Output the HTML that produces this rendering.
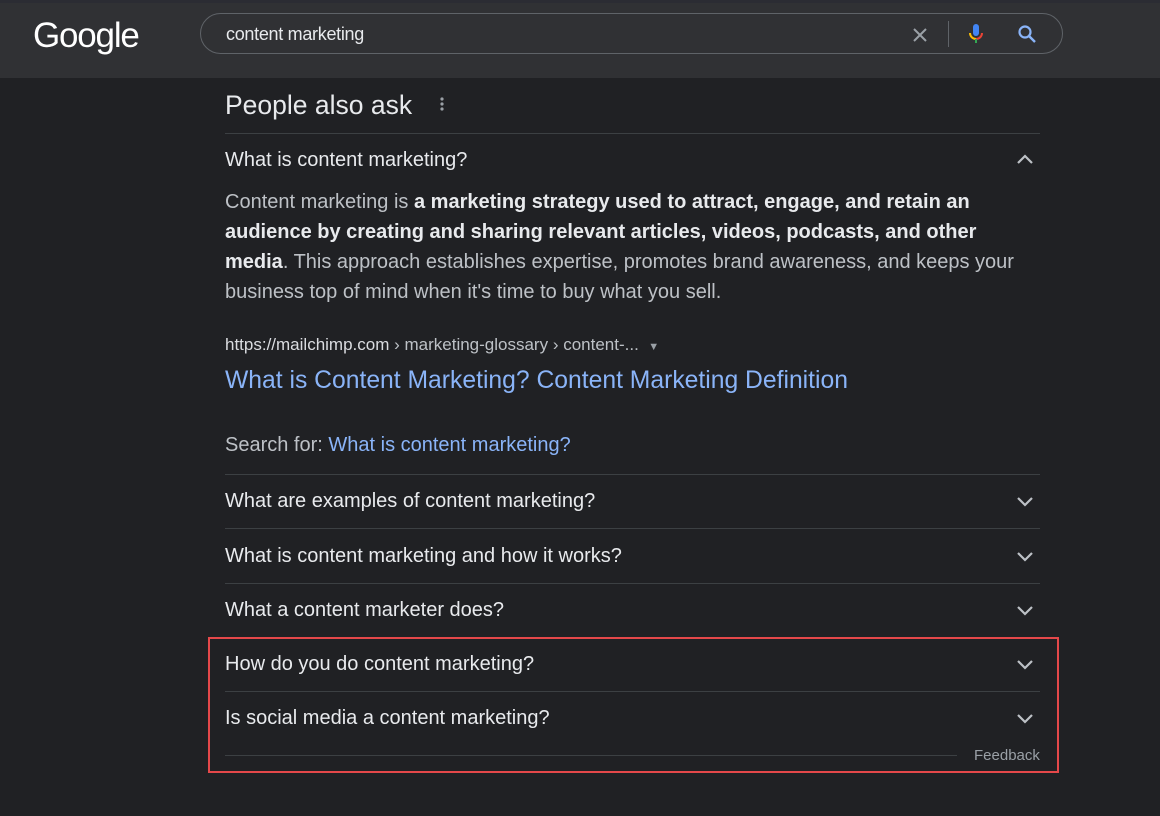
<!DOCTYPE html>
<html><head><meta charset="utf-8"><style>
body{margin:0;width:1160px;height:816px;background:#202124;font-family:"Liberation Sans",Arial,sans-serif;position:relative;overflow:hidden;color:#bdc1c6}
.hdr{position:absolute;left:0;top:0;width:1160px;height:78px;background:#303134;border-top:3px solid #2b2c33;box-sizing:border-box}
.logo{position:absolute;left:33px;top:16px;font-size:35px;color:#fff;letter-spacing:-1.2px}
.sb{position:absolute;left:200px;top:13px;width:863px;height:41px;border:1px solid #5f6368;border-radius:22px;box-sizing:border-box}
.q{position:absolute;left:226px;top:24px;font-size:18px;color:#e8eaed;letter-spacing:-0.3px}
.abs{position:absolute}
.line{position:absolute;left:225px;width:815px;height:1px;background:#3c4043}
.qu{position:absolute;left:225px;font-size:20px;color:#e8eaed}
.chev{position:absolute;left:1016px}
.ans{position:absolute;left:225px;top:187px;width:800px;font-size:20px;line-height:30px;color:#bdc1c6}
.ans b{color:#e8eaed}
</style></head><body>
<div class="hdr"></div>
<div class="logo">Google</div>
<div class="sb"></div>
<div class="q">content marketing</div>
<svg class="abs" style="left:911px;top:26px" width="18" height="18"><path d="M3 3L15 15M15 3L3 15" stroke="#9aa0a6" stroke-width="2"/></svg>
<div class="abs" style="left:948px;top:21px;width:1px;height:26px;background:#5f6368"></div>
<svg class="abs" style="left:966px;top:23px" width="20" height="24"><rect x="7" y="1" width="6" height="12" rx="3" fill="#4285f4"/><path d="M4 10a6 6 0 0 0 6 6" stroke="#fbbc04" stroke-width="2" fill="none"/><path d="M10 16a6 6 0 0 0 6-6" stroke="#ea4335" stroke-width="2" fill="none"/><path d="M10 16v4" stroke="#34a853" stroke-width="2"/></svg>
<svg class="abs" style="left:1017px;top:24px" width="22" height="22"><circle cx="8" cy="8" r="5.5" stroke="#8ab4f8" stroke-width="2.2" fill="none"/><path d="M12 12l6 6" stroke="#8ab4f8" stroke-width="2.4"/></svg>

<div class="abs" style="left:225px;top:90px;font-size:26.5px;color:#e8eaed">People also ask</div>
<svg class="abs" style="left:438px;top:96px" width="8" height="18"><circle cx="4" cy="3" r="1.6" fill="#9aa0a6"/><circle cx="4" cy="8" r="1.6" fill="#9aa0a6"/><circle cx="4" cy="13" r="1.6" fill="#9aa0a6"/></svg>
<div class="line" style="top:133px"></div>
<div class="qu" style="top:149px">What is content marketing?</div>
<svg class="chev" style="top:151px" width="18" height="18"><path d="M2 12L9 5L16 12" stroke="#bdc1c6" stroke-width="2.2" fill="none"/></svg>
<div class="ans">Content marketing is <b>a marketing strategy used to attract, engage, and retain an audience by creating and sharing relevant articles, videos, podcasts, and other media</b>. This approach establishes expertise, promotes brand awareness, and keeps your business top of mind when it's time to buy what you sell.</div>
<div class="abs" style="left:225px;top:335px;font-size:17px;color:#dadce0">https://mailchimp.com <span style="color:#bdc1c6">› marketing-glossary › content-... &nbsp;<span style="font-size:11px;color:#9aa0a6">▼</span></span></div>
<div class="abs" style="left:225px;top:367px;font-size:24.7px;color:#8ab4f8">What is Content Marketing? Content Marketing Definition</div>
<div class="abs" style="left:225px;top:434px;font-size:20px;color:#bdc1c6">Search for: <span style="color:#8ab4f8">What is content marketing?</span></div>
<div class="line" style="top:474px"></div>
<div class="qu" style="top:490px">What are examples of content marketing?</div>
<div class="line" style="top:528px"></div>
<div class="qu" style="top:545px">What is content marketing and how it works?</div>
<div class="line" style="top:583px"></div>
<div class="qu" style="top:599px">What a content marketer does?</div>
<div class="line" style="top:637px"></div>
<div class="qu" style="top:653px">How do you do content marketing?</div>
<div class="line" style="top:691px"></div>
<div class="qu" style="top:707px">Is social media a content marketing?</div>
<svg class="chev" style="top:492px" width="18" height="18"><path d="M2 6L9 13L16 6" stroke="#bdc1c6" stroke-width="2.2" fill="none"/></svg>
<svg class="chev" style="top:547px" width="18" height="18"><path d="M2 6L9 13L16 6" stroke="#bdc1c6" stroke-width="2.2" fill="none"/></svg>
<svg class="chev" style="top:601px" width="18" height="18"><path d="M2 6L9 13L16 6" stroke="#bdc1c6" stroke-width="2.2" fill="none"/></svg>
<svg class="chev" style="top:655px" width="18" height="18"><path d="M2 6L9 13L16 6" stroke="#bdc1c6" stroke-width="2.2" fill="none"/></svg>
<svg class="chev" style="top:709px" width="18" height="18"><path d="M2 6L9 13L16 6" stroke="#bdc1c6" stroke-width="2.2" fill="none"/></svg>
<div class="abs" style="left:225px;top:755px;width:732px;height:1px;background:#3c4043"></div>
<div class="abs" style="left:974px;top:747px;font-size:15px;color:#9aa0a6">Feedback</div>
<div class="abs" style="left:208px;top:637px;width:851px;height:136px;border:2.5px solid #e5484a;box-sizing:border-box"></div>
</body></html>
